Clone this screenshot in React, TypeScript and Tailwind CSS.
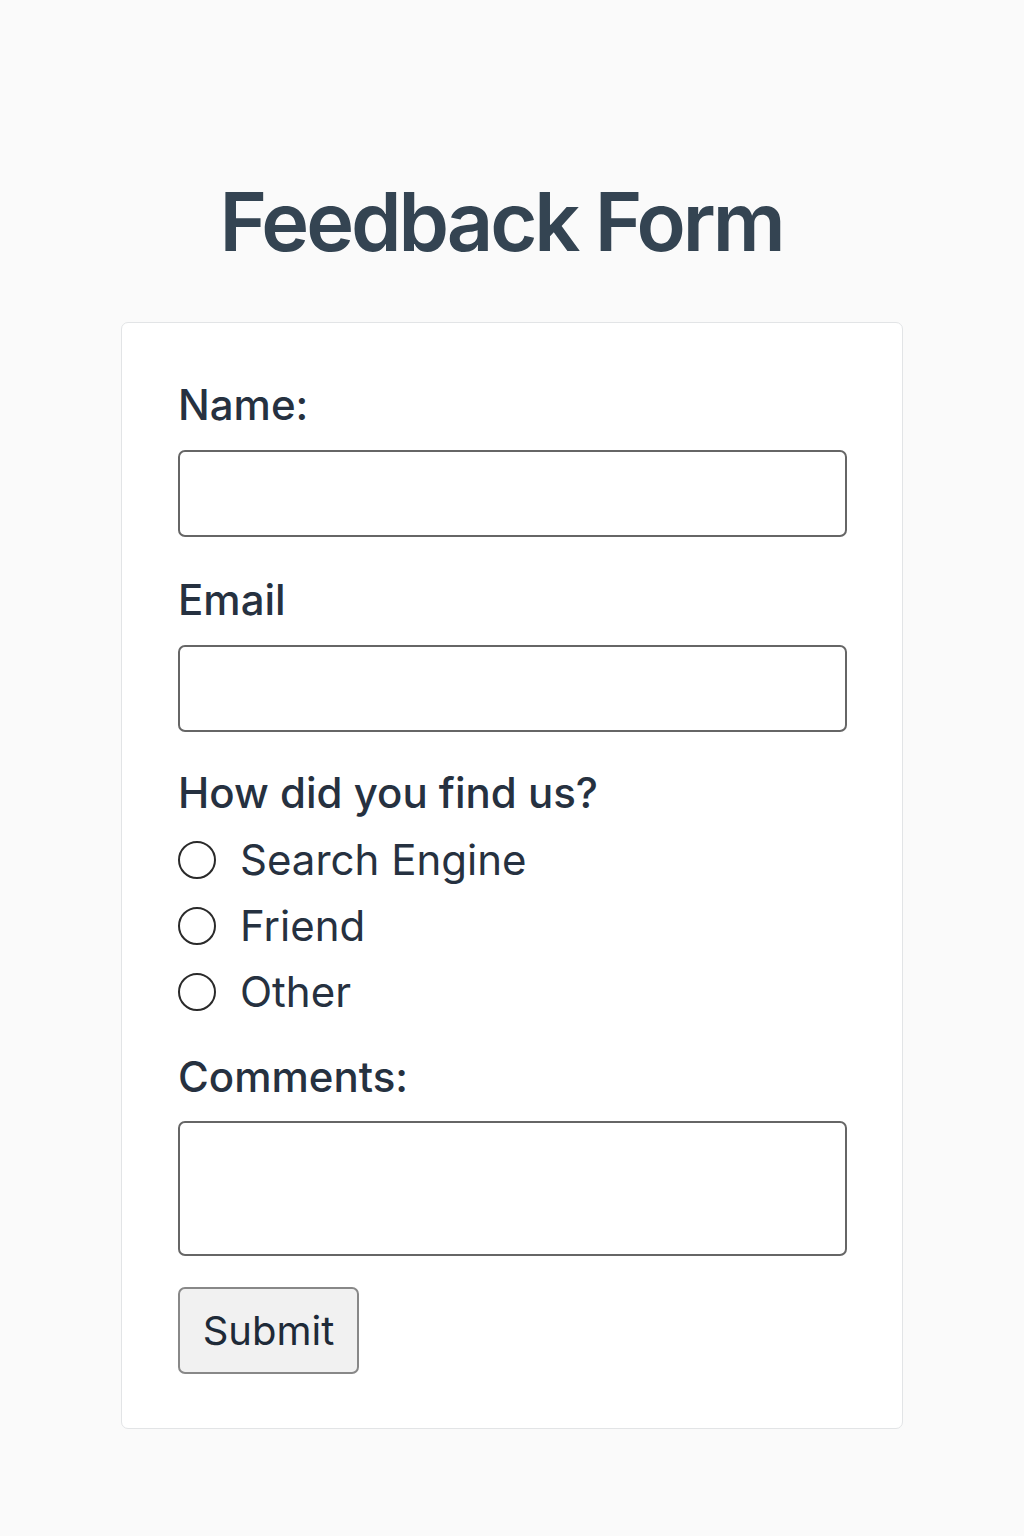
import React from "react";

const font = { fontFamily: "Inter, 'Noto Sans', sans-serif" };

export default function App() {
  return (
    <div
      className="min-h-[1536px] w-full bg-[#fafafa] flex flex-col items-center pt-[182px]"
      style={font}
    >
      <h1 className="text-[81px] leading-[81px] font-semibold text-[#344452] tracking-[-0.038em] pr-[22px]">
        Feedback Form
      </h1>
      <form
        className="mt-[59px] w-[782px] bg-white border border-[#e2e4e6] rounded-[7px] pl-[56px] pr-[55px] pt-[58px] pb-[54px] flex flex-col text-[#263140]"
        onSubmit={(e) => e.preventDefault()}
      >
        <label className="text-[42px] leading-[48px] font-medium">Name:</label>
        <input
          type="text"
          className="mt-[21px] h-[87px] w-full rounded-[7px] border-2 border-[#666] bg-white"
        />
        <label className="mt-[39px] text-[42px] leading-[48px] font-medium">Email</label>
        <input
          type="email"
          className="mt-[21px] h-[87px] w-full rounded-[7px] border-2 border-[#666] bg-white"
        />
        <div className="mt-[37px] text-[42px] leading-[48px] font-medium">How did you find us?</div>
        <div className="mt-[10px] flex flex-col">
          {["Search Engine", "Friend", "Other"].map((o) => (
            <label key={o} className="h-[66px] flex items-center">
              <span className="w-[38px] h-[38px] rounded-full border-2 border-[#2a2a2a] bg-white shrink-0" />
              <span className="ml-[24px] text-[42px] leading-[48px]">{o}</span>
            </label>
          ))}
        </div>
        <label className="mt-[28px] text-[42px] leading-[48px] font-medium">Comments:</label>
        <textarea className="mt-[20px] h-[135px] w-full rounded-[7px] border-2 border-[#666] bg-white resize-none" />
        <div className="mt-[31px]">
          <button
            type="submit"
            className="h-[87px] w-[181px] rounded-[7px] border-2 border-[#888] bg-[#f1f1f1] text-[40px] leading-[48px] text-[#1e2a38]"
          >
            Submit
          </button>
        </div>
      </form>
    </div>
  );
}
